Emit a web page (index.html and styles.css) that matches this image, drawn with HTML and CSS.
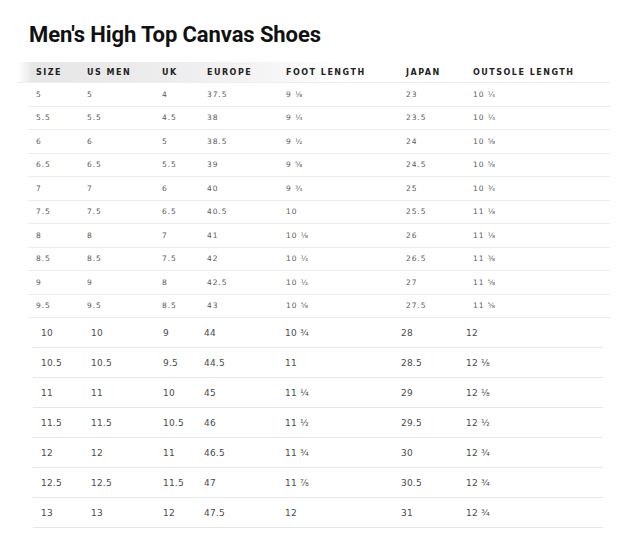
FILE: index.html
```html
<!DOCTYPE html>
<html>
<head>
<meta charset="utf-8">
<link rel="stylesheet" href="styles.css">
</head>
<body>
<h1 class="title">Men's High Top Canvas Shoes</h1>
<div class="chart-top">
  <div class="head">
    <span>SIZE</span><span>US MEN</span><span>UK</span><span>EUROPE</span><span>FOOT LENGTH</span><span>JAPAN</span><span>OUTSOLE LENGTH</span>
  </div>
  <div class="row"><span>5</span><span>5</span><span>4</span><span>37.5</span><span>9 ⅛</span><span>23</span><span>10 ¼</span></div>
  <div class="row"><span>5.5</span><span>5.5</span><span>4.5</span><span>38</span><span>9 ¼</span><span>23.5</span><span>10 ¼</span></div>
  <div class="row"><span>6</span><span>6</span><span>5</span><span>38.5</span><span>9 ½</span><span>24</span><span>10 ⅝</span></div>
  <div class="row"><span>6.5</span><span>6.5</span><span>5.5</span><span>39</span><span>9 ⅝</span><span>24.5</span><span>10 ⅝</span></div>
  <div class="row"><span>7</span><span>7</span><span>6</span><span>40</span><span>9 ¾</span><span>25</span><span>10 ¾</span></div>
  <div class="row"><span>7.5</span><span>7.5</span><span>6.5</span><span>40.5</span><span>10</span><span>25.5</span><span>11 ⅛</span></div>
  <div class="row"><span>8</span><span>8</span><span>7</span><span>41</span><span>10 ⅛</span><span>26</span><span>11 ⅛</span></div>
  <div class="row"><span>8.5</span><span>8.5</span><span>7.5</span><span>42</span><span>10 ¼</span><span>26.5</span><span>11 ⅜</span></div>
  <div class="row"><span>9</span><span>9</span><span>8</span><span>42.5</span><span>10 ½</span><span>27</span><span>11 ⅝</span></div>
  <div class="row"><span>9.5</span><span>9.5</span><span>8.5</span><span>43</span><span>10 ⅝</span><span>27.5</span><span>11 ⅝</span></div>
</div>
<div class="chart-bottom">
  <div class="row"><span>10</span><span>10</span><span>9</span><span>44</span><span>10 ¾</span><span>28</span><span>12</span></div>
  <div class="row"><span>10.5</span><span>10.5</span><span>9.5</span><span>44.5</span><span>11</span><span>28.5</span><span>12 ⅛</span></div>
  <div class="row"><span>11</span><span>11</span><span>10</span><span>45</span><span>11 ¼</span><span>29</span><span>12 ⅛</span></div>
  <div class="row"><span>11.5</span><span>11.5</span><span>10.5</span><span>46</span><span>11 ½</span><span>29.5</span><span>12 ½</span></div>
  <div class="row"><span>12</span><span>12</span><span>11</span><span>46.5</span><span>11 ¾</span><span>30</span><span>12 ¾</span></div>
  <div class="row"><span>12.5</span><span>12.5</span><span>11.5</span><span>47</span><span>11 ⅞</span><span>30.5</span><span>12 ¾</span></div>
  <div class="row"><span>13</span><span>13</span><span>12</span><span>47.5</span><span>12</span><span>31</span><span>12 ¾</span></div>
</div>
</body>
</html>
```
FILE: styles.css
```css
html, body {
  margin: 0;
  padding: 0;
  background: #ffffff;
}
body {
  width: 631px;
  height: 535px;
  overflow: hidden;
  font-family: "DejaVu Sans", sans-serif;
}
.title {
  margin: 0;
  padding: 22px 0 0 29px;
  height: 25px;
  font-family: Roboto, "Liberation Sans", sans-serif;
  font-weight: 700;
  font-size: 22px;
  line-height: 25px;
  letter-spacing: -0.1px;
  color: #111111;
}
.chart-top {
  margin: 15px 0 0 18px;
  width: 592px;
}
.head {
  display: grid;
  grid-template-columns: 51px 75px 45px 79px 120px 67px 1fr;
  height: 20px;
  padding-left: 18px;
  align-items: center;
  font-weight: 700;
  font-size: 8px;
  letter-spacing: 1.5px;
  color: #222222;
  background: linear-gradient(to right, rgba(225,225,225,0) 0px, #e6e6e6 14px, #ededed 150px, #f6f6f6 260px, rgba(255,255,255,0) 330px);
  border-bottom: 1px solid #eeeeee;
}
.head span, .row span {
  white-space: nowrap;
}
.chart-top .row {
  display: grid;
  grid-template-columns: 51px 75px 45px 79px 120px 67px 1fr;
  height: 22.5px;
  margin-left: 10px;
  padding-left: 8px;
  align-items: center;
  font-size: 7.5px;
  letter-spacing: 0.9px;
  color: #5a5a5a;
  border-bottom: 1px solid #ececec;
}
.chart-bottom {
  margin: 0 0 0 33px;
  width: 570px;
}
.chart-bottom .row {
  display: grid;
  grid-template-columns: 50px 72px 41px 81px 116px 65px 1fr;
  height: 29px;
  padding-left: 8px;
  align-items: center;
  font-size: 9px;
  letter-spacing: 0.2px;
  color: #4a4a4a;
  border-bottom: 1px solid #e6e6e6;
}
```
